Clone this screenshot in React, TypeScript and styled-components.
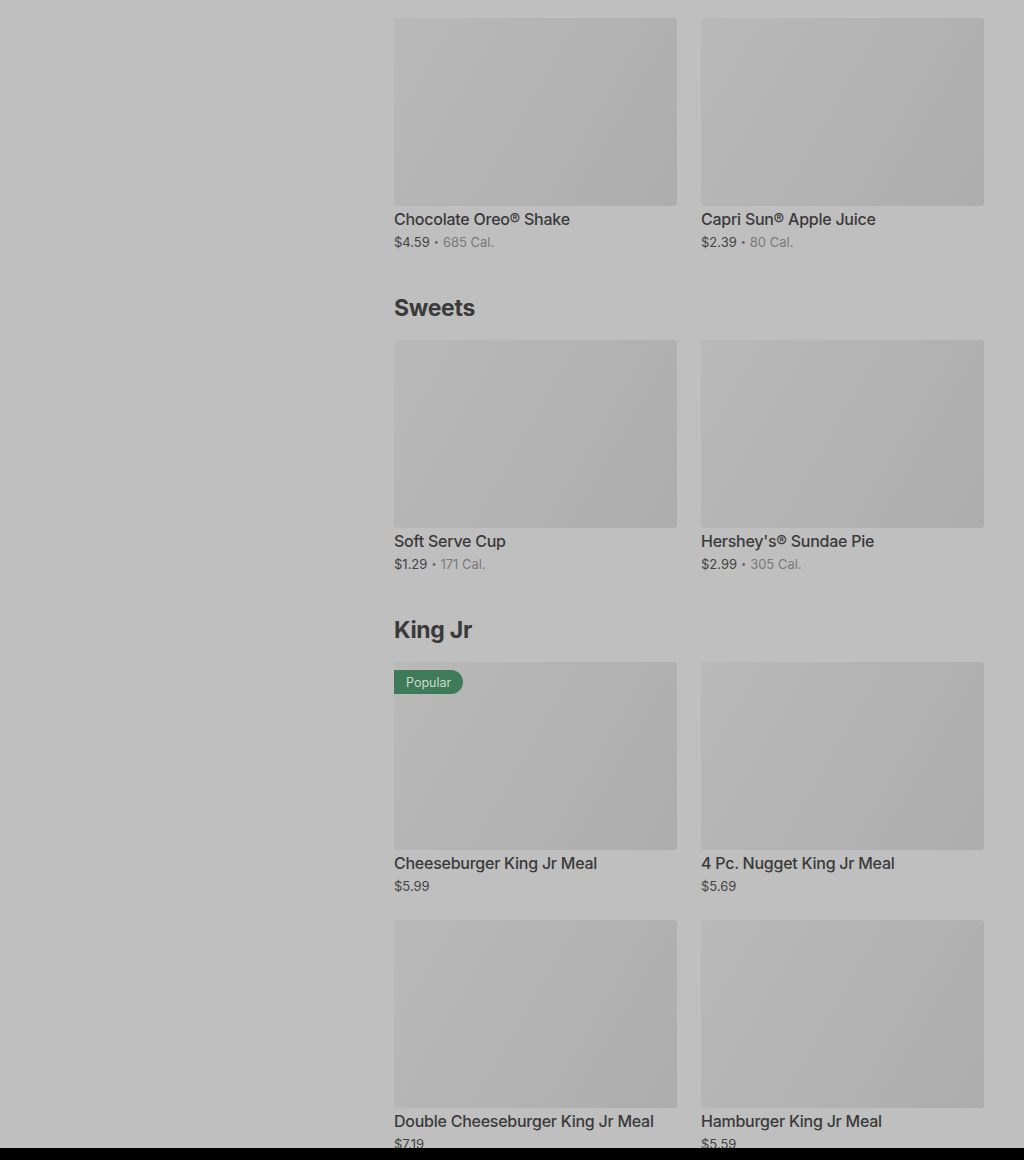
import React from "react";
import styled, { createGlobalStyle } from "styled-components";

type Item = {
  name: string;
  price: string;
  cal?: string;
  popular?: boolean;
};

type Section = {
  title?: string;
  items: Item[];
};

const sections: Section[] = [
  {
    items: [
      { name: "Chocolate Oreo® Shake", price: "$4.59", cal: "685 Cal." },
      { name: "Capri Sun® Apple Juice", price: "$2.39", cal: "80 Cal." },
    ],
  },
  {
    title: "Sweets",
    items: [
      { name: "Soft Serve Cup", price: "$1.29", cal: "171 Cal." },
      { name: "Hershey's® Sundae Pie", price: "$2.99", cal: "305 Cal." },
    ],
  },
  {
    title: "King Jr",
    items: [
      { name: "Cheeseburger King Jr Meal", price: "$5.99", popular: true },
      { name: "4 Pc. Nugget King Jr Meal", price: "$5.69" },
      { name: "Double Cheeseburger King Jr Meal", price: "$7.19" },
      { name: "Hamburger King Jr Meal", price: "$5.59" },
    ],
  },
];

const GlobalStyle = createGlobalStyle`
  body {
    margin: 0;
    background: #bfbfbf;
    font-family: Inter, "Noto Sans", sans-serif;
    color: #3b3b3b;
  }
`;

const App: React.FC = () => {
  return (
    <>
      <GlobalStyle />
      <Page>
        <Sidebar />
        <Menu>
          {sections.map((section, i) => (
            <SectionWrapper key={i} first={i === 0}>
              {section.title && <Heading>{section.title}</Heading>}
              <Grid>
                {section.items.map((item) => (
                  <Card key={item.name}>
                    <Picture>
                      {item.popular && <Badge>Popular</Badge>}
                    </Picture>
                    <Name>{item.name}</Name>
                    <Meta>
                      {item.price}
                      {item.cal && (
                        <>
                          <Dot>•</Dot>
                          <Cal>{item.cal}</Cal>
                        </>
                      )}
                    </Meta>
                  </Card>
                ))}
              </Grid>
            </SectionWrapper>
          ))}
        </Menu>
      </Page>
      <BottomBar />
    </>
  );
};

const Page = styled.div`
  display: grid;
  grid-template-columns: 1fr 590px;
  padding: 0 40px 40px 0;
  min-height: 1160px;
  box-sizing: border-box;
`;

const Sidebar = styled.aside``;

const Menu = styled.main`
  display: flex;
  flex-direction: column;
`;

const SectionWrapper = styled.section<{ first?: boolean }>`
  padding-top: ${(p) => (p.first ? "18px" : "40px")};
`;

const Heading = styled.h2`
  margin: 0 0 16px;
  font-size: 23px;
  line-height: 32px;
  font-weight: 700;
  color: #3a3a3a;
  letter-spacing: -0.3px;
`;

const Grid = styled.div`
  display: grid;
  grid-template-columns: 1fr 1fr;
  column-gap: 24px;
  row-gap: 24px;
`;

const Card = styled.article`
  display: flex;
  flex-direction: column;
  height: 234px;
`;

const Picture = styled.div`
  position: relative;
  flex: none;
  height: 188px;
  border-radius: 3px;
  background: linear-gradient(120deg, #b9b9b9 0%, #b3b3b3 50%, #adadad 100%);
`;

const Badge = styled.span`
  position: absolute;
  top: 8px;
  left: 0;
  height: 24px;
  padding: 0 12px;
  display: flex;
  align-items: center;
  font-size: 12.5px;
  color: #c9dccf;
  background: #3f7a59;
  border-radius: 0 12px 12px 0;
`;

const Name = styled.div`
  margin-top: 2px;
  font-size: 16px;
  line-height: 22px;
  font-weight: 500;
  letter-spacing: -0.25px;
  color: #3a3a3a;
`;

const Meta = styled.div`
  margin-top: 2px;
  font-size: 13px;
  line-height: 20px;
  color: #444444;
  display: flex;
  align-items: center;
`;

const Dot = styled.span`
  margin: 0 4px;
  font-size: 9px;
  color: #666666;
`;

const Cal = styled.span`
  color: #7a7a7a;
`;

const BottomBar = styled.div`
  position: fixed;
  left: 0;
  right: 0;
  bottom: 0;
  height: 12px;
  background: #000000;
`;

export default App;
